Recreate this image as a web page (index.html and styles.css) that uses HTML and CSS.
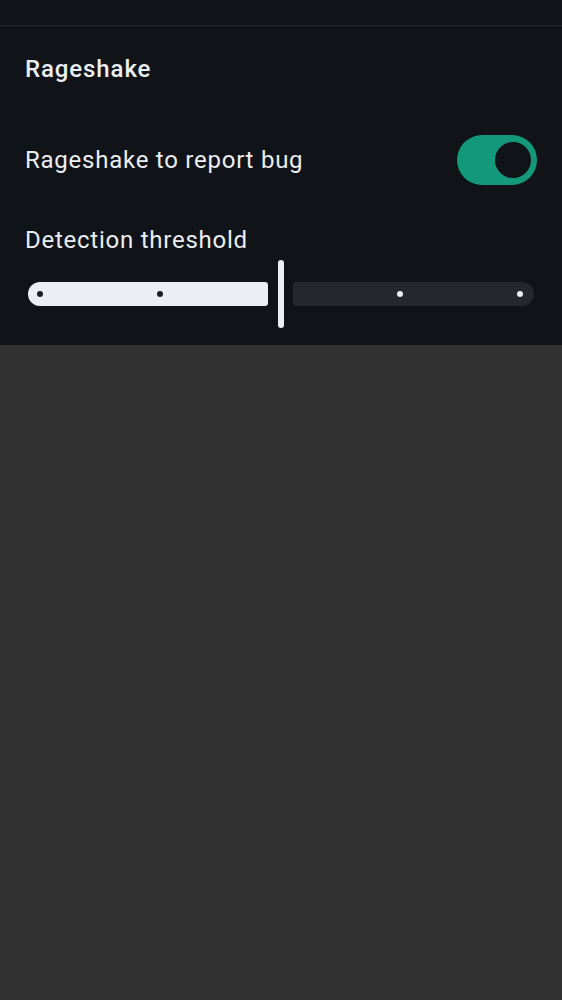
FILE: index.html
```html
<!DOCTYPE html>
<html lang="en">
<head>
<meta charset="utf-8">
<link rel="stylesheet" href="styles.css">
</head>
<body>
<div class="panel">
  <div class="topbar"></div>
  <div class="content">
    <div class="title">Rageshake</div>
    <div class="row">
      <span class="label">Rageshake to report bug</span>
      <div class="toggle"><div class="thumb"></div></div>
    </div>
    <div class="label threshold">Detection threshold</div>
    <div class="slider">
      <div class="track active">
        <span class="dot"></span><span class="dot"></span>
      </div>
      <div class="handle"></div>
      <div class="track inactive">
        <span class="dot"></span><span class="dot"></span>
      </div>
    </div>
  </div>
</div>
</body>
</html>
```

FILE: styles.css
```css
html, body {
  margin: 0;
  padding: 0;
  background: #323232;
  font-family: Roboto, "Noto Sans", sans-serif;
}
.panel {
  background: #101317;
  color: #ebeef2;
}
.topbar {
  height: 25px;
  border-bottom: 1px solid #26282d;
}
.content {
  padding: 29px 25px 17px 25px;
  display: flex;
  flex-direction: column;
}
.title {
  font-size: 24px;
  font-weight: 500;
  line-height: 28px;
  letter-spacing: 0.9px;
}
.row {
  margin-top: 52px;
  height: 50px;
  display: flex;
  align-items: center;
  justify-content: space-between;
}
.label {
  font-size: 24px;
  line-height: 32px;
  font-weight: 400;
  letter-spacing: 0.75px;
}
.threshold {
  margin-top: 39px;
}
.toggle {
  width: 80px;
  height: 50px;
  border-radius: 25px;
  background: #13997a;
  display: flex;
  align-items: center;
  justify-content: flex-end;
  padding-right: 6px;
  box-sizing: border-box;
}
.thumb {
  width: 36px;
  height: 36px;
  border-radius: 50%;
  background: #101317;
}
.slider {
  margin: 4px 3px 0 3px;
  height: 68px;
  display: flex;
  align-items: center;
}
.track {
  height: 24px;
  display: flex;
  align-items: center;
  gap: 114px;
  box-sizing: border-box;
}
.active {
  width: 240px;
  background: #ebeef2;
  border-radius: 12px 3px 3px 12px;
  padding-left: 9px;
}
.active .dot {
  background: #1b1d22;
}
.handle {
  width: 6px;
  height: 68px;
  border-radius: 3px;
  background: #ebeef2;
  margin: 0 9px 0 10px;
}
.inactive {
  flex: 1;
  background: #26272c;
  border-radius: 3px 12px 12px 3px;
  justify-content: flex-end;
  padding-right: 11px;
}
.inactive .dot {
  background: #ebeef2;
}
.dot {
  width: 6px;
  height: 6px;
  border-radius: 50%;
}
```
